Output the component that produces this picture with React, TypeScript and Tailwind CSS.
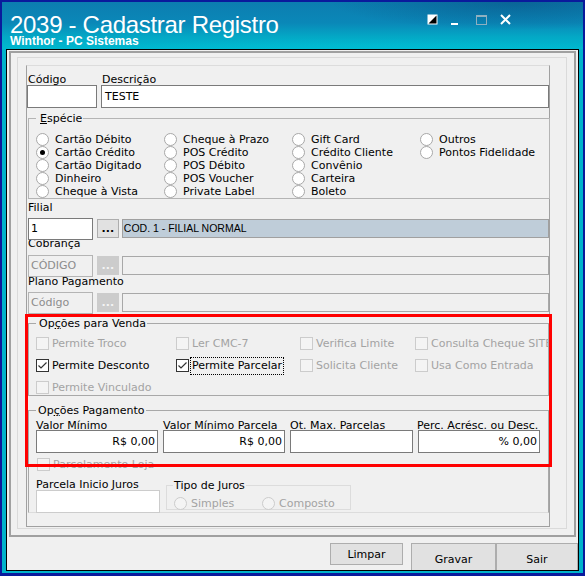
import React from "react";

type RadioProps = { label: string; checked?: boolean; disabled?: boolean; gap?: string };

function Radio({ label, checked = false, disabled = false, gap = "gap-[6px]" }: RadioProps) {
  return (
    <div className={`flex h-[13px] items-center whitespace-nowrap ${gap}`}>
      <span
        className={
          disabled
            ? "h-[13px] w-[13px] shrink-0 rounded-full border border-[#cccccc] bg-[#f4f4f4]"
            : "flex h-[13px] w-[13px] shrink-0 items-center justify-center rounded-full border border-[#a8a8a8] bg-white"
        }
      >
        {checked && <span className="h-[5px] w-[5px] rounded-full bg-black" />}
      </span>
      <span className={disabled ? "leading-[13px] text-[#a3a3a3]" : "leading-[13px]"}>{label}</span>
    </div>
  );
}

type CheckProps = { label: string; checked?: boolean; disabled?: boolean; focus?: boolean; w?: string };

function Check({ label, checked = false, disabled = false, focus = false, w = "" }: CheckProps) {
  return (
    <div className={`flex h-[13px] shrink-0 items-center whitespace-nowrap ${w}`}>
      <span
        className={
          disabled
            ? "h-[13px] w-[13px] shrink-0 border border-[#cccccc] bg-[#f4f4f4]"
            : "flex h-[13px] w-[13px] shrink-0 items-center justify-center border border-[#333333] bg-white"
        }
      >
        {checked && (
          <svg width="11" height="11" viewBox="0 0 11 11">
            <path d="M1.5 5.5 L4 8 L9.5 2.5" fill="none" stroke="#333333" strokeWidth="1.2" />
          </svg>
        )}
      </span>
      {focus ? (
        <span className="ml-[1px] border border-dotted border-black px-[1px] leading-[16px]">{label}</span>
      ) : (
        <span className={disabled ? "ml-[3px] leading-[13px] text-[#a3a3a3]" : "ml-[3px] leading-[13px]"}>{label}</span>
      )}
    </div>
  );
}

function TitleBar() {
  return (
    <div className="flex h-[47px] shrink-0 bg-[radial-gradient(ellipse_260px_40px_at_88%_0%,rgba(8,80,130,0.55),transparent_70%),radial-gradient(ellipse_420px_30px_at_60%_120%,rgba(0,200,220,0.6),transparent_70%),linear-gradient(180deg,#0c7db0_0%,#0a88b8_45%,#03a9c6_75%,#00b8cf_100%)] text-white">
      <div className="pl-[8px] font-['Liberation_Sans',Arial,sans-serif]">
        <div className="mt-[11px] whitespace-nowrap text-[24px] leading-[24px] tracking-[-0.3px]">2039 - Cadastrar Registro</div>
        <div className="mt-[-2px] whitespace-nowrap text-[12px] font-bold leading-[12px]">Winthor - PC Sistemas</div>
      </div>
      <div className="ml-auto mr-[72px] mt-[12px] flex h-[11px] items-start">
        <svg width="11" height="11" viewBox="0 0 11 11">
          <rect x="0.5" y="0.5" width="10" height="10" fill="white" />
          <path d="M9.5 1.5 L9.5 9.5 L1.5 9.5 Z" fill="black" />
        </svg>
        <svg className="ml-[13px]" width="7" height="11" viewBox="0 0 7 11">
          <rect x="0" y="9" width="7" height="2" fill="white" />
        </svg>
        <svg className="ml-[18px]" width="11" height="11" viewBox="0 0 11 11">
          <rect x="0.5" y="1.5" width="10" height="9" fill="none" stroke="#8fb0c0" />
          <rect x="0" y="1" width="11" height="2" fill="#8fb0c0" />
        </svg>
        <svg className="ml-[13px]" width="11" height="11" viewBox="0 0 11 11">
          <path d="M1 1 L10 10 M10 1 L1 10" stroke="white" strokeWidth="2" />
        </svg>
      </div>
    </div>
  );
}

const especie = [
  ["Cartão Débito", "Cartão Crédito", "Cartão Digitado", "Dinheiro", "Cheque à Vista"],
  ["Cheque à Prazo", "POS Crédito", "POS Débito", "POS Voucher", "Private Label"],
  ["Gift Card", "Crédito Cliente", "Convênio", "Carteira", "Boleto"],
  ["Outros", "Pontos Fidelidade"],
];

function LookupRow({ code, desc, disabled = false }: { code: string; desc: string; disabled?: boolean }) {
  return (
    <div className="relative z-10 ml-[1px] flex h-[22px]">
      <div
        className={
          disabled
            ? "h-[22px] w-[65px] border border-[#b4b4b4] bg-[#f0f0f0] pl-[2px] leading-[20px] text-[#8c8c8c]"
            : "h-[22px] w-[65px] border border-[#7a7a7a] bg-white pl-[2px] leading-[20px]"
        }
      >
        {code}
      </div>
      <div
        className={
          disabled
            ? "ml-[4px] mt-[1px] flex h-[19px] w-[22px] items-center justify-center border border-[#cccccc] bg-[#cccccc] font-bold leading-[13px] text-[#f4f4f4]"
            : "ml-[4px] mt-[1px] flex h-[19px] w-[22px] items-center justify-center border border-[#adadad] bg-[#e1e1e1] font-bold leading-[13px]"
        }
      >
        ...
      </div>
      <div
        className={
          disabled
            ? "ml-[3px] mt-[1px] h-[19px] w-[428px] border border-[#a8a8a8] bg-[#f0f0f0]"
            : "ml-[3px] mt-[1px] h-[19px] w-[428px] whitespace-nowrap border border-[#a0a0a0] bg-[#bfcdd9] pl-[1px] font-['Liberation_Sans',Arial,sans-serif] text-[10.5px] leading-[17px]"
        }
      >
        {desc}
      </div>
    </div>
  );
}

export default function App() {
  return (
    <div className="relative h-[576px] w-[585px] overflow-hidden bg-[#0a1a9c] pb-[3px] pl-[2px] pr-[2px] pt-[2px] font-['DejaVu_Sans',sans-serif] text-[11px] text-black">
      <div className="flex h-full flex-col bg-[#00b3cb]">
        <TitleBar />
        <div className="mb-[2px] ml-[4px] mr-[4px] flex min-h-0 flex-1 flex-col overflow-hidden border border-black bg-[#f0f0f0]">
          <div className="ml-[2px] mt-[1px] h-[486px] w-[567px] shrink-0 border-2 border-[#a0a0a0]">
            <div className="ml-[6px] mt-[4px] h-[472px] w-[550px] border border-[#dadada]">
              <div className="ml-[8px] mt-[7px] h-[462px] w-[524px] border border-[#a0a0a0] border-t-[#dcdcdc]">
                {/* codigo / descricao */}
                <div className="mt-[7px] flex">
                  <div className="w-[70px]">
                    <div className="h-[12px] pl-[1px] leading-[13px]">Código</div>
                    <div className="h-[23px] border border-[#7a7a7a] bg-white" />
                  </div>
                  <div className="ml-[4px] w-[448px]">
                    <div className="h-[12px] pl-[1px] leading-[13px]">Descrição</div>
                    <div className="h-[23px] border border-[#7a7a7a] bg-white pl-[3px] leading-[21px]">TESTE</div>
                  </div>
                </div>

                <fieldset className="ml-[1px] mt-[4px] w-[522px] min-w-0 border border-[#b4b4b4] pl-[7px] pt-[8px]">
                  <legend className="pl-[4px] pr-[1px] leading-[13px]">
                    <span className="underline">E</span>spécie
                  </legend>
                  <div className="flex">
                    {especie.map((col, i) => (
                      <div key={i} className="flex w-[128px] flex-col">
                        {col.map((r) => (
                          <Radio key={r} label={r} checked={r === "Cartão Crédito"} />
                        ))}
                      </div>
                    ))}
                  </div>
                </fieldset>

                <div className="ml-[1px] mt-[2px] h-[17px] leading-[13px]">Filial</div>
                <LookupRow code="1" desc="COD. 1 - FILIAL NORMAL" />
                <div className="ml-[1px] mt-[-3px] h-[18px] leading-[13px]">Cobrança</div>
                <LookupRow code="CÓDIGO" desc="" disabled />
                <div className="ml-[1px] mt-[-2px] h-[17px] leading-[13px]">Plano Pagamento</div>
                <LookupRow code="Código" desc="" disabled />

                <fieldset className="ml-[1px] mt-[3px] w-[521px] min-w-0 border border-[#a8a8a8] pb-[1px] pl-[7px] pt-[7px]">
                  <legend className="pl-[3px] pr-[1px] leading-[13px]">
                    Op<span className="underline">ç</span>ões para Venda
                  </legend>
                  <div className="flex w-[512px] flex-col gap-[9px] overflow-hidden">
                    <div className="flex">
                      <Check w="w-[140px]" label="Permite Troco" disabled />
                      <Check w="w-[124px]" label="Ler CMC-7" disabled />
                      <Check w="w-[115px]" label="Verifica Limite" disabled />
                      <Check label="Consulta Cheque SITEF" disabled />
                    </div>
                    <div className="flex">
                      <Check w="w-[140px]" label="Permite Desconto" checked />
                      <Check w="w-[124px]" label="Permite Parcelar" checked focus />
                      <Check w="w-[115px]" label="Solicita Cliente" disabled />
                      <Check label="Usa Como Entrada" disabled />
                    </div>
                    <div className="flex">
                      <Check w="w-[140px]" label="Permite Vinculado" disabled />
                    </div>
                  </div>
                </fieldset>

                <fieldset className="ml-[1px] mt-[8px] h-[109px] w-[521px] min-w-0 border border-[#a8a8a8] border-b-[#dcdcdc] pl-[7px] pt-[2px]">
                  <legend className="pl-[2px] pr-[1px] leading-[13px]">
                    Op<span className="underline">ç</span>ões Pagamento
                  </legend>
                  <div className="flex h-[11px] gap-[5px]">
                    <div className="w-[122px] whitespace-nowrap leading-[13px]">Valor Mínimo</div>
                    <div className="w-[122px] whitespace-nowrap leading-[13px]">Valor Mínimo Parcela</div>
                    <div className="w-[122px] whitespace-nowrap leading-[13px]">Ot. Max. Parcelas</div>
                    <div className="w-[122px] whitespace-nowrap leading-[13px]">Perc. Acrésc. ou Desc.</div>
                  </div>
                  <div className="relative z-10 flex h-[23px] gap-[5px]">
                    <div className="w-[122px] border border-[#7a7a7a] bg-white pr-[2px] text-right leading-[21px]">R$ 0,00</div>
                    <div className="w-[122px] border border-[#7a7a7a] bg-white pr-[2px] text-right leading-[21px]">R$ 0,00</div>
                    <div className="w-[123px] border border-[#7a7a7a] bg-white" />
                    <div className="w-[122px] border border-[#7a7a7a] bg-white pr-[2px] text-right leading-[21px]">% 0,00</div>
                  </div>
                  <div className="ml-[1px] mt-[5px]">
                    <Check label="Parcelamento Loja" disabled />
                  </div>
                  <div className="mt-[7px] flex">
                    <div className="w-[124px]">
                      <div className="h-[12px] whitespace-nowrap leading-[13px]">Parcela Inicio Juros</div>
                      <div className="h-[23px] border border-[#cccccc] bg-white" />
                    </div>
                    <fieldset className="ml-[6px] mt-[1px] h-[31px] w-[185px] min-w-0 border border-[#dcdcdc] pl-[6px] pt-[5px]">
                      <legend className="pl-[1px] pr-[1px] leading-[13px]">Tipo de Juros</legend>
                      <div className="ml-[1px] flex">
                        <div className="w-[88px]">
                          <Radio label="Simples" disabled gap="gap-[4px]" />
                        </div>
                        <Radio label="Composto" disabled gap="gap-[4px]" />
                      </div>
                    </fieldset>
                  </div>
                </fieldset>
              </div>
            </div>
          </div>

          <div className="mt-[6px] flex shrink-0 justify-end">
            <button type="button" className="mr-[8px] flex h-[22px] w-[73px] items-center justify-center border border-[#adadad] bg-[#e1e1e1] leading-[13px]">
              Limpar
            </button>
            <button type="button" className="flex h-[32px] w-[85px] shrink-0 items-center justify-center border border-[#adadad] bg-[#e1e1e1] leading-[13px]">
              Gravar
            </button>
            <button type="button" className="flex h-[32px] w-[82px] shrink-0 items-center justify-center border border-[#adadad] bg-[#e1e1e1] leading-[13px]">
              Sair
            </button>
          </div>
        </div>
      </div>
      <div className="pointer-events-none absolute left-[25px] top-[314px] h-[153px] w-[527px] border-[3px] border-[#ff0000]" />
    </div>
  );
}
